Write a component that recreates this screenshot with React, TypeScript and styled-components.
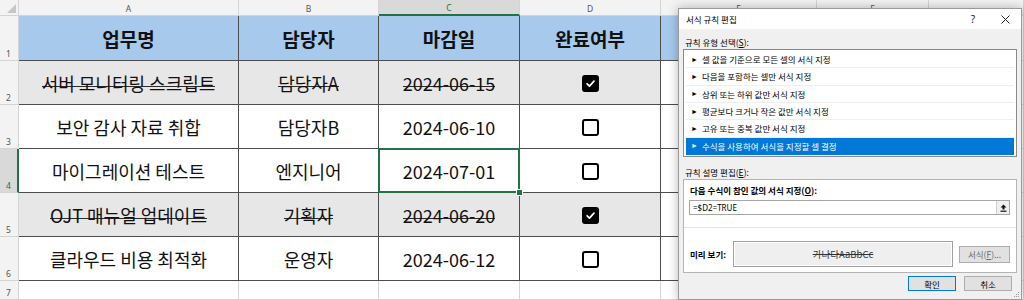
import React from 'react';
import styled, { createGlobalStyle, css } from 'styled-components';

const GlobalStyle = createGlobalStyle`
  html, body {
    margin: 0;
    padding: 0;
  }
  body {
    width: 1024px;
    height: 300px;
    overflow: hidden;
    background: #fff;
    font-family: "Noto Sans CJK KR", "Noto Sans", sans-serif;
  }
`;

const DARK = '#4d4d4d';
const LIGHT = '#d4d4d4';
const GREEN = '#217346';

const Page = styled.div`
  position: relative;
  width: 1024px;
  height: 300px;
  overflow: hidden;
`;

const Sheet = styled.div`
  display: grid;
  grid-template-columns: 19px 220px 140px 141px 141px 156px 112px 1fr;
  grid-template-rows: 16px 45px 44px 44px 44px 44px 44px 1fr;
  height: 300px;
`;

const Corner = styled.div`
  background: #f3f3f3;
  border-right: 1px solid ${LIGHT};
  border-bottom: 1px solid ${LIGHT};
  box-sizing: border-box;
  display: flex;
  align-items: flex-end;
  justify-content: flex-end;
  padding: 0 2px 2px 0;
`;

const ColHead = styled.div<{ $active?: boolean }>`
  box-sizing: border-box;
  background: ${p => (p.$active ? '#d9d9d9' : '#f3f3f3')};
  border-right: 1px solid ${LIGHT};
  border-bottom: ${p => (p.$active ? `2px solid ${GREEN}` : `1px solid ${LIGHT}`)};
  font-family: "Noto Sans", sans-serif;
  font-size: 8.5px;
  color: ${p => (p.$active ? GREEN : '#555')};
  display: flex;
  align-items: center;
  justify-content: center;
  padding-top: 1px;
`;

const RowHead = styled.div<{ $active?: boolean }>`
  box-sizing: border-box;
  background: ${p => (p.$active ? '#d9d9d9' : '#f3f3f3')};
  border-right: ${p => (p.$active ? `2px solid ${GREEN}` : `1px solid ${LIGHT}`)};
  border-bottom: 1px solid ${LIGHT};
  font-family: "Noto Sans", sans-serif;
  font-size: 8.5px;
  color: ${p => (p.$active ? GREEN : '#555')};
  display: flex;
  align-items: flex-end;
  padding: 0 0 1px 6px;
`;

type Fill = 'head' | 'done' | 'plain';

const fills: Record<Fill, string> = {
  head: '#a6c9ec',
  done: '#e7e7e7',
  plain: '#ffffff',
};

const Cell = styled.div<{ $fill: Fill; $selected?: boolean; $bold?: boolean; $soft?: boolean }>`
  position: relative;
  box-sizing: border-box;
  background: ${p => fills[p.$fill]};
  border-right: 1px solid ${p => (p.$soft ? LIGHT : DARK)};
  border-bottom: 1px solid ${p => (p.$soft ? LIGHT : DARK)};
  display: flex;
  align-items: center;
  justify-content: center;
  font-size: ${p => (p.$bold ? '19px' : '18px')};
  font-weight: ${p => (p.$bold ? 700 : 400)};
  color: #111;
  white-space: nowrap;
  padding-top: 1px;
  ${p =>
    p.$selected &&
    css`
      &::after {
        content: '';
        position: absolute;
        top: -1px;
        left: -1px;
        right: -1px;
        bottom: -1px;
        border: 2px solid ${GREEN};
      }
      &::before {
        content: '';
        position: absolute;
        right: -4px;
        bottom: -4px;
        width: 5px;
        height: 5px;
        background: ${GREEN};
        border: 1px solid #fff;
        z-index: 2;
      }
    `}
`;

// Excel draws the strike line a bit below the middle of Hangul glyphs
const Struck = styled.span<{ $on: boolean }>`
  ${p =>
    p.$on &&
    css`
      background-image: linear-gradient(#2b2b2b, #2b2b2b);
      background-repeat: no-repeat;
      background-size: 100% 1px;
      background-position: 0 62%;
    `}
`;

const Check = styled.span<{ $checked: boolean }>`
  display: inline-flex;
  align-items: center;
  justify-content: center;
  width: 17px;
  height: 17px;
  box-sizing: border-box;
  border: 2px solid #000;
  border-radius: 3px;
  background: ${p => (p.$checked ? '#000' : '#fff')};
`;

/* ---------- dialog ---------- */

const Dialog = styled.div`
  position: absolute;
  left: 678px;
  top: 8px;
  width: 344px;
  height: 292px;
  box-sizing: border-box;
  background: #f0f0f0;
  border: 1px solid #9a9a9a;
  box-shadow: 0 0 10px rgba(0, 0, 0, 0.28);
  font-family: "Noto Sans CJK KR", sans-serif;
  font-size: 8.5px;
  color: #000;
  display: flex;
  flex-direction: column;
`;

const TitleBar = styled.div`
  height: 20px;
  background: #fff;
  display: flex;
  align-items: center;
  padding-left: 7px;
  font-size: 8.5px;
`;

const Title = styled.span`
  flex: 1;
`;

const TitleButton = styled.span`
  width: 32px;
  display: flex;
  justify-content: center;
  font-family: "Noto Sans", sans-serif;
  font-size: 10px;
  color: #222;
`;

const Body = styled.div`
  flex: 1;
  padding: 0 4px;
  display: flex;
  flex-direction: column;
`;

const Label = styled.div<{ $top: number }>`
  padding-top: ${p => p.$top}px;
  line-height: 14px;
  height: 14px;
  padding-left: 2px;
`;

const ListBox = styled.div`
  height: 108px;
  box-sizing: border-box;
  border: 1px solid #8a8a8a;
  background: #fff;
  padding: 1px 1px;
  display: flex;
  flex-direction: column;
`;

const ListItem = styled.div<{ $selected?: boolean }>`
  height: 17.5px;
  box-sizing: border-box;
  display: flex;
  align-items: center;
  gap: 4px;
  padding-left: 5px;
  background: ${p => (p.$selected ? '#0078d7' : '#fff')};
  color: ${p => (p.$selected ? '#fff' : '#000')};
  border-bottom: 1px solid ${p => (p.$selected ? '#0078d7' : '#efefef')};
  margin: 0 1px;
`;

const Arrow = styled.span`
  font-size: 7px;
  line-height: 1;
`;

const Panel = styled.div`
  height: 94px;
  box-sizing: border-box;
  border: 1px solid #b4b4b4;
  background: #fff;
  padding: 3px 6px 5px 5px;
  display: flex;
  flex-direction: column;
`;

const BoldLabel = styled.div`
  font-weight: 700;
  line-height: 14px;
  height: 14px;
  padding-left: 1px;
`;

const FormulaBox = styled.div`
  margin-top: 3px;
  height: 15px;
  box-sizing: border-box;
  border: 1px solid #a5a5a5;
  background: #fff;
  display: flex;
  align-items: center;
  padding-left: 3px;
  font-family: "Noto Sans", sans-serif;
  font-size: 8px;
`;

const FormulaText = styled.span`
  flex: 1;
`;

const CollapseButton = styled.span`
  width: 13px;
  height: 13px;
  box-sizing: border-box;
  background: #f0f0f0;
  border-left: 1px solid #d0d0d0;
  display: flex;
  align-items: center;
  justify-content: center;
`;

const Separator = styled.div`
  margin: 12px -6px 0 -5px;
  height: 1px;
  background: #e3e3e3;
`;

const PreviewRow = styled.div`
  margin-top: 13px;
  display: flex;
  align-items: center;
`;

const PreviewLabel = styled.span`
  width: 43px;
  font-weight: 700;
  padding-left: 1px;
`;

const PreviewBox = styled.div`
  width: 220px;
  height: 26px;
  box-sizing: border-box;
  border: 1px solid #a0a0a0;
  box-shadow: inset 0 0 0 1px #fff;
  background: #efefef;
  display: flex;
  align-items: center;
  justify-content: center;
  text-decoration: line-through;
  color: #333;
  font-size: 9.5px;
`;

const Button = styled.span<{ $focus?: boolean; $muted?: boolean }>`
  display: flex;
  align-items: center;
  justify-content: center;
  box-sizing: border-box;
  background: #e1e1e1;
  border: 1px solid ${p => (p.$focus ? '#0078d7' : '#adadad')};
  color: ${p => (p.$muted ? '#6a6a6a' : '#000')};
`;

const FormatButton = styled(Button)`
  margin-left: 6px;
  width: 51px;
  height: 17px;
`;

const ButtonRow = styled.div`
  margin-top: 3px;
  display: flex;
  justify-content: flex-end;
  gap: 8px;
  padding-right: 5px;
`;

const DialogButton = styled(Button)`
  width: 48px;
  height: 15px;
`;

const Grip = styled.svg`
  position: absolute;
  right: 1px;
  bottom: 1px;
`;

const U = styled.span`
  text-decoration: underline;
`;

interface Task {
  task: string;
  owner: string;
  due: string;
  done: boolean;
}

const tasks: Task[] = [
  { task: '서버 모니터링 스크립트', owner: '담당자A', due: '2024-06-15', done: true },
  { task: '보안 감사 자료 취합', owner: '담당자B', due: '2024-06-10', done: false },
  { task: '마이그레이션 테스트', owner: '엔지니어', due: '2024-07-01', done: false },
  { task: 'OJT 매뉴얼 업데이트', owner: '기획자', due: '2024-06-20', done: true },
  { task: '클라우드 비용 최적화', owner: '운영자', due: '2024-06-12', done: false },
];

const ruleTypes = [
  '셀 값을 기준으로 모든 셀의 서식 지정',
  '다음을 포함하는 셀만 서식 지정',
  '상위 또는 하위 값만 서식 지정',
  '평균보다 크거나 작은 값만 서식 지정',
  '고유 또는 중복 값만 서식 지정',
  '수식을 사용하여 서식을 지정할 셀 결정',
];

const CheckMark: React.FC<{ checked: boolean }> = ({ checked }) => (
  <Check $checked={checked}>
    {checked && (
      <svg width="11" height="11" viewBox="0 0 12 12">
        <path d="M2.3 6.3 L4.9 8.8 L9.8 3.4" fill="none" stroke="#fff" strokeWidth="1.9" strokeLinecap="round" strokeLinejoin="round" />
      </svg>
    )}
  </Check>
);

const App: React.FC = () => {
  const selectedRow = 4;
  return (
    <Page>
      <GlobalStyle />
      <Sheet>
        <Corner>
          <svg width="9" height="9" viewBox="0 0 9 9">
            <path d="M9 0 L9 9 L0 9 Z" fill="#c6c6c6" />
          </svg>
        </Corner>
        {['A', 'B', 'C', 'D', 'E', 'F', ''].map(c => (
          <ColHead key={c || 'G'} $active={c === 'C'}>
            {c}
          </ColHead>
        ))}

        <RowHead>1</RowHead>
        <Cell $fill="head" $bold>업무명</Cell>
        <Cell $fill="head" $bold>담당자</Cell>
        <Cell $fill="head" $bold>마감일</Cell>
        <Cell $fill="head" $bold>완료여부</Cell>
        <Cell $fill="head" />
        <Cell $fill="plain" $soft />
        <Cell $fill="plain" $soft />

        {tasks.map((t, i) => {
          const rowNo = i + 2;
          const fill: Fill = t.done ? 'done' : 'plain';
          return (
            <React.Fragment key={t.task}>
              <RowHead $active={rowNo === selectedRow}>{rowNo}</RowHead>
              <Cell $fill={fill}>
                <Struck $on={t.done}>{t.task}</Struck>
              </Cell>
              <Cell $fill={fill}>
                <Struck $on={t.done}>{t.owner}</Struck>
              </Cell>
              <Cell $fill={fill} $selected={rowNo === selectedRow}>
                <Struck $on={t.done}>{t.due}</Struck>
              </Cell>
              <Cell $fill={fill}>
                <CheckMark checked={t.done} />
              </Cell>
              <Cell $fill="plain" />
              <Cell $fill="plain" $soft />
              <Cell $fill="plain" $soft />
            </React.Fragment>
          );
        })}

        <RowHead>7</RowHead>
        {Array.from({ length: 7 }).map((_, i) => (
          <Cell key={i} $fill="plain" $soft />
        ))}
      </Sheet>

      <Dialog>
        <TitleBar>
          <Title>서식 규칙 편집</Title>
          <TitleButton>?</TitleButton>
          <TitleButton>
            <svg width="9" height="9" viewBox="0 0 9 9">
              <path d="M0.5 0.5 L8.5 8.5 M8.5 0.5 L0.5 8.5" stroke="#222" strokeWidth="1" />
            </svg>
          </TitleButton>
        </TitleBar>
        <Body>
          <Label $top={6}>
            규칙 유형 선택(<U>S</U>):
          </Label>
          <ListBox>
            {ruleTypes.map((r, i) => (
              <ListItem key={r} $selected={i === ruleTypes.length - 1}>
                <Arrow>►</Arrow>
                {r}
              </ListItem>
            ))}
          </ListBox>
          <Label $top={8}>
            규칙 설명 편집(<U>E</U>):
          </Label>
          <Panel>
            <BoldLabel>
              다음 수식이 참인 값의 서식 지정(<U>O</U>):
            </BoldLabel>
            <FormulaBox>
              <FormulaText>=$D2=TRUE</FormulaText>
              <CollapseButton>
                <svg width="7" height="8" viewBox="0 0 7 8">
                  <path d="M3.5 0.5 L6.5 3.5 L4.5 3.5 L4.5 5.5 L2.5 5.5 L2.5 3.5 L0.5 3.5 Z" fill="#111" />
                  <rect x="0.5" y="6.6" width="6" height="1.2" fill="#111" />
                </svg>
              </CollapseButton>
            </FormulaBox>
            <Separator />
            <PreviewRow>
              <PreviewLabel>미리 보기:</PreviewLabel>
              <PreviewBox>가나다AaBbCc</PreviewBox>
              <FormatButton $muted>
                서식(<U>F</U>)...
              </FormatButton>
            </PreviewRow>
          </Panel>
          <ButtonRow>
            <DialogButton $focus>확인</DialogButton>
            <DialogButton>취소</DialogButton>
          </ButtonRow>
        </Body>
        <Grip width="8" height="8" viewBox="0 0 8 8">
          <rect x="6" y="2" width="1" height="1" fill="#999" />
          <rect x="4" y="4" width="1" height="1" fill="#999" />
          <rect x="6" y="4" width="1" height="1" fill="#999" />
          <rect x="2" y="6" width="1" height="1" fill="#999" />
          <rect x="4" y="6" width="1" height="1" fill="#999" />
          <rect x="6" y="6" width="1" height="1" fill="#999" />
        </Grip>
      </Dialog>
    </Page>
  );
};

export default App;
